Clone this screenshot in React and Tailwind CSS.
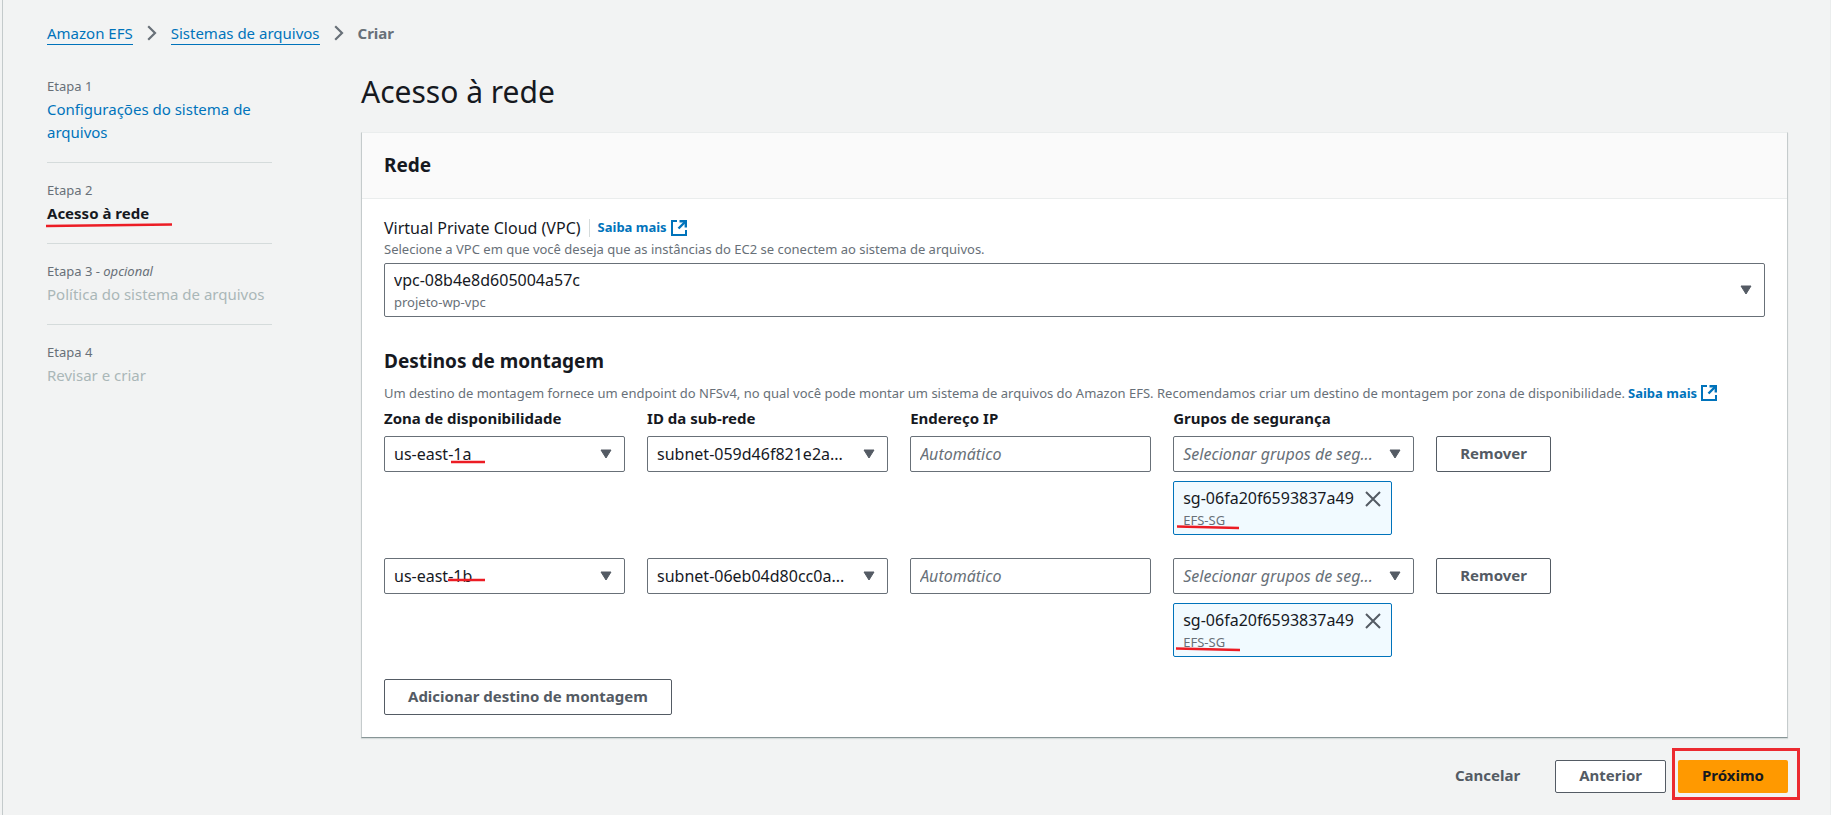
import React from "react";

const targets = [
  {
    id: "a",
    zone: "us-east-1a",
    subnet: "subnet-059d46f821e2a...",
    group: "sg-06fa20f6593837a49",
    groupName: "EFS-SG",
    zoneMark: <Mark className="left-[66px] top-[24px] w-[36px]" d="M1 2 L35 2" width={36} />,
    groupMark: <Mark className="left-[2px] top-[43px] w-[64px]" d="M1 1.5 L63 3" width={64} />,
  },
  {
    id: "b",
    zone: "us-east-1b",
    subnet: "subnet-06eb04d80cc0a...",
    group: "sg-06fa20f6593837a49",
    groupName: "EFS-SG",
    zoneMark: <Mark className="left-[63px] top-[20px] w-[39px]" d="M1 2 L38 2" width={39} />,
    groupMark: <Mark className="left-[1px] top-[43px] w-[66px]" d="M1 1.5 L65 3" width={66} />,
  },
];

function Mark({ className, d, width }) {
  return (
    <svg
      className={"pointer-events-none absolute h-[5px] " + className}
      viewBox={`0 0 ${width} 5`}
      fill="none"
      stroke="#ec1c24"
      strokeWidth="2.4"
      aria-hidden="true"
    >
      <path d={d} />
    </svg>
  );
}

function Chevron() {
  return (
    <svg className="h-4 w-[10px]" viewBox="0 0 10 16" fill="none" stroke="#687078" strokeWidth="2.2" aria-hidden="true">
      <path d="M1.2 1.2 L8 8 L1.2 14.8" />
    </svg>
  );
}

function Caret() {
  return (
    <svg
      className="pointer-events-none absolute right-[13px] top-1/2 h-[10px] w-3 -translate-y-1/2"
      viewBox="0 0 12 10"
      fill="#545b64"
      stroke="#545b64"
      strokeLinejoin="round"
      aria-hidden="true"
    >
      <path d="M1 1 H11 L6 9 Z" />
    </svg>
  );
}

function ExternalIcon() {
  return (
    <svg className="h-4 w-4 shrink-0" viewBox="0 0 16 16" fill="none" stroke="#0073bb" strokeWidth="2" aria-hidden="true">
      <path d="M6 1 H1 V15 H15 V10" />
      <path d="M8.5 1.2 H14.8 V7.5" strokeWidth="2.4" />
      <path d="M14.5 1.5 L7.5 8.5" strokeWidth="2.4" />
    </svg>
  );
}

function LearnMore() {
  return (
    <a href="#saiba-mais" className="inline-flex items-center gap-1 text-[13px] font-bold text-[#0073bb]">
      Saiba mais
      <ExternalIcon />
    </a>
  );
}

function Select({ label, value, placeholder, children }) {
  return (
    <div className="relative">
      <select
        aria-label={label}
        defaultValue={value}
        className={
          placeholder
            ? "block h-9 w-full appearance-none truncate rounded-xs border border-[#687078] bg-white pl-[9px] pr-9 text-base italic text-[#687078]"
            : "block h-9 w-full appearance-none truncate rounded-xs border border-[#687078] bg-white pl-[9px] pr-9 text-base text-[#16191f]"
        }
      >
        <option>{value}</option>
      </select>
      <Caret />
      {children}
    </div>
  );
}

const outlineButton =
  "rounded-xs border border-[#545b64] bg-white px-[23px] pb-0.5 text-[15px] font-bold text-[#545b64]";

function Target({ target }) {
  return (
    <>
      <Select label="Zona de disponibilidade" value={target.zone}>
        {target.zoneMark}
      </Select>
      <Select label="ID da sub-rede" value={target.subnet} />
      <input
        type="text"
        aria-label="Endereço IP"
        placeholder="Automático"
        className="block h-9 w-full rounded-xs border border-[#687078] bg-white px-[9px] text-base placeholder:italic placeholder:text-[#687078]"
      />
      <div>
        <Select label="Grupos de segurança" value="Selecionar grupos de seg..." placeholder />
        <div className="relative mt-[9px] inline-flex h-[54px] items-start gap-[11px] rounded-xs border border-[#0073bb] bg-[#f1faff] pl-[9px] pr-[10px] pt-[5px]">
          <div>
            <div className="text-base leading-[23px] text-[#16191f]">{target.group}</div>
            <div className="text-[13px] leading-5 text-[#687078]">{target.groupName}</div>
          </div>
          <button type="button" aria-label={"Remover " + target.group} className="mt-1">
            <svg className="h-4 w-4" viewBox="0 0 16 16" fill="none" stroke="#545b64" strokeWidth="2" aria-hidden="true">
              <path d="M1 1 L15 15 M15 1 L1 15" />
            </svg>
          </button>
          {target.groupMark}
        </div>
      </div>
      <div>
        <button type="button" className={outlineButton + " h-9"}>
          Remover
        </button>
      </div>
    </>
  );
}

function Step({ label, optional, children }) {
  return (
    <li className="border-b border-[#d5dbdb] pb-[18px] pt-4 first:pt-0 last:border-b-0">
      <div className="text-[13px] leading-[23px] text-[#687078]">
        {label}
        {optional && (
          <>
            {" - "}
            <i>opcional</i>
          </>
        )}
      </div>
      <div className="text-[15px] leading-[23px]">{children}</div>
    </li>
  );
}

export default function App() {
  return (
    <div className="flex min-h-screen bg-[#f2f3f3] font-['Noto_Sans',sans-serif] text-[15px] text-[#16191f]">
      <div className="ml-[2px] flex-1 border-l border-r border-l-[#c4cacb] border-r-[#eaeded] pb-[22px] pl-11 pr-[42px] pt-[21px]">
        <nav aria-label="Trilha" className="flex h-6 items-center gap-[14px] leading-[22px]">
          <a href="#efs" className="border-b border-[#0073bb] text-[#0073bb]">
            Amazon EFS
          </a>
          <Chevron />
          <a href="#sistemas" className="border-b border-[#0073bb] text-[#0073bb]">
            Sistemas de arquivos
          </a>
          <Chevron />
          <span className="font-bold text-[#687078]">Criar</span>
        </nav>

        <div className="mt-[30px] flex items-start">
          <ol className="w-[225px] shrink-0">
            <Step label="Etapa 1">
              <a href="#etapa1" className="text-[#0073bb]">
                Configurações do sistema de arquivos
              </a>
            </Step>
            <Step label="Etapa 2">
              <span className="relative font-bold">
                Acesso à rede
                <Mark className="left-[-2px] top-[20px] w-[128px]" d="M1 3 L127 1.5" width={128} />
              </span>
            </Step>
            <Step label="Etapa 3" optional>
              <span className="text-[#aab7b8]">Política do sistema de arquivos</span>
            </Step>
            <Step label="Etapa 4">
              <span className="text-[#aab7b8]">Revisar e criar</span>
            </Step>
          </ol>

          <main className="ml-[89px] min-w-0 flex-1">
            <h1 className="text-[30px] leading-[34px]">Acesso à rede</h1>

            <section className="mt-[23px] border border-b-[#879596] border-l-[#c5cbcc] border-r-[#c5cbcc] border-t-[#eaeded] bg-white shadow-[0_1px_1px_0_#d5dbdb]">
              <header className="border-b border-[#eaeded] bg-[#fafafa] px-[22px] py-5">
                <h2 className="text-[19px] font-bold leading-[25px]">Rede</h2>
              </header>

              <div className="px-[22px] pb-[22px] pt-[17px]">
                <div className="flex h-6 items-center">
                  <label htmlFor="vpc" className="text-base">
                    Virtual Private Cloud (VPC)
                  </label>
                  <div className="ml-2 flex h-[18px] items-center border-l border-[#d5dbdb] pl-2">
                    <LearnMore />
                  </div>
                </div>
                <p className="text-[13px] leading-[18px] text-[#687078]">
                  Selecione a VPC em que você deseja que as instâncias do EC2 se conectem ao sistema de arquivos.
                </p>
                <div className="relative mt-[5px]">
                  <select
                    id="vpc"
                    className="block h-[54px] w-full appearance-none rounded-xs border border-[#687078] bg-white pb-5 pl-[9px] pr-9 text-base text-[#16191f]"
                  >
                    <option>vpc-08b4e8d605004a57c</option>
                  </select>
                  <span className="pointer-events-none absolute bottom-[5px] left-[10px] text-[13px] leading-5 text-[#687078]">
                    projeto-wp-vpc
                  </span>
                  <Caret />
                </div>

                <h2 className="mt-8 text-[19px] font-bold leading-[25px]">Destinos de montagem</h2>
                <p className="mt-[10px] flex items-center gap-[3px] text-[13px] leading-[18px] text-[#687078]">
                  Um destino de montagem fornece um endpoint do NFSv4, no qual você pode montar um sistema de arquivos do
                  Amazon EFS. Recomendamos criar um destino de montagem por zona de disponibilidade. <LearnMore />
                </p>

                <div className="mt-[5px] grid grid-cols-[repeat(4,minmax(0,11fr))_minmax(0,15fr)] gap-x-[22px] font-bold leading-[22px]">
                  <div>Zona de disponibilidade</div>
                  <div>ID da sub-rede</div>
                  <div>Endereço IP</div>
                  <div>Grupos de segurança</div>
                </div>
                <div className="mt-[7px] grid grid-cols-[repeat(4,minmax(0,11fr))_minmax(0,15fr)] items-start gap-x-[22px] gap-y-[23px]">
                  {targets.map((target) => (
                    <Target key={target.id} target={target} />
                  ))}
                </div>

                <button type="button" className={outlineButton + " mt-[22px] block h-9"}>
                  Adicionar destino de montagem
                </button>
              </div>
            </section>

            <div className="mt-[22px] flex items-center justify-end">
              <button type="button" className="mr-3 h-[33px] px-[23px] pb-0.5 font-bold text-[#545b64]">
                Cancelar
              </button>
              <button type="button" className={outlineButton + " mr-3 h-[33px]"}>
                Anterior
              </button>
              <div className="relative">
                <button type="button" className="h-[33px] rounded-xs bg-[#ff9900] px-6 pb-0.5 font-bold text-[#16191f]">
                  Próximo
                </button>
                <div className="pointer-events-none absolute -bottom-[7px] -left-[6px] -right-[12px] -top-3 border-[3px] border-[#ec2a30]" />
              </div>
            </div>
          </main>
        </div>
      </div>
    </div>
  );
}
